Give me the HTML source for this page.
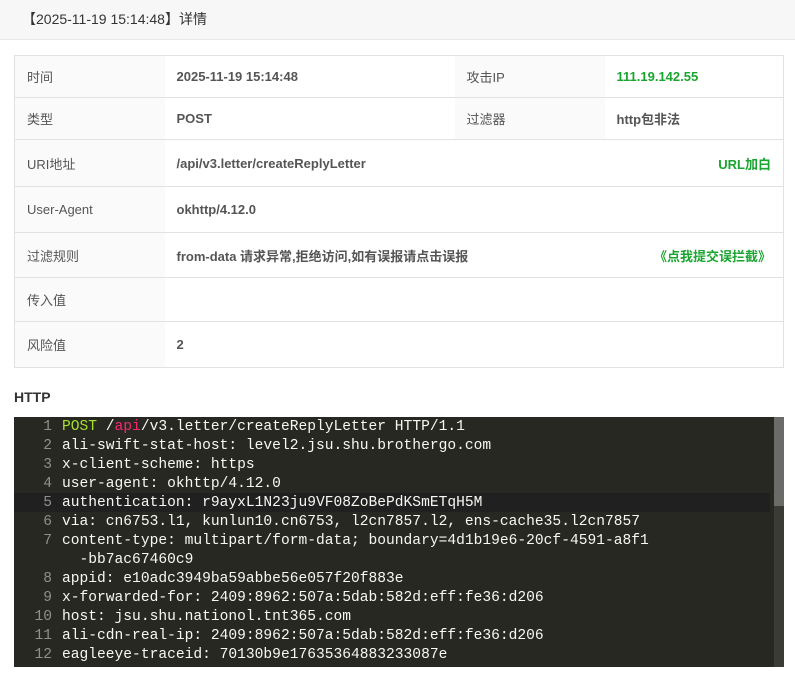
<!DOCTYPE html>
<html><head><meta charset="utf-8"><style>
*{margin:0;padding:0;box-sizing:border-box}
body{width:795px;height:681px;background:#fff;font-family:"Liberation Sans","Noto Sans CJK SC",sans-serif;font-size:13px;color:#333;overflow:hidden;position:relative}
.top{height:40px;background:#f7f7f7;border-bottom:1px solid #e8e8e8;padding-left:22px;line-height:38px;font-size:14px;color:#333}
table{position:absolute;left:14px;top:55px;width:770px;border-collapse:collapse;border:1px solid #e2e2e2}
td{border-top:1px solid #e2e2e2;border-bottom:1px solid #e2e2e2;padding:0 12px;color:#555;font-size:13px}
td.l{background:#fafafa;width:150px}
td.v{font-weight:bold;color:#555}
.g{color:#1aa530;font-weight:bold}
.fx{display:flex;justify-content:space-between;align-items:center}
h3{position:absolute;left:14px;top:389px;font-size:14px;font-weight:bold;color:#333}
.code{position:absolute;left:14px;top:417px;width:770px;height:250px;background:#272822;overflow:hidden;font-family:"Liberation Mono","DejaVu Sans Mono",monospace;font-size:14.6px;color:#f8f8f2}
.in{position:absolute;left:0;top:2px;width:100%;height:100%}
.ln{position:absolute;left:0;width:38px;text-align:right;color:#8f908a}
.tx{position:absolute;left:48px;white-space:pre}
.sb{position:absolute;right:0;top:0;width:10px;height:250px;background:#3a3a37}
.th{position:absolute;right:0;top:0;width:10px;height:89px;background:#6b6b69}
.hl{position:absolute;left:0;top:76px;width:756px;height:19px;background:#202020}
</style></head><body>
<div class="top">【2025-11-19 15:14:48】详情</div>
<table>
<tr style="height:42px"><td class="l">时间</td><td class="v" style="width:290px">2025-11-19 15:14:48</td><td class="l" style="width:117px">攻击IP</td><td class="g">111.19.142.55</td></tr>
<tr style="height:42px"><td class="l">类型</td><td class="v">POST</td><td class="l">过滤器</td><td class="v">http包非法</td></tr>
<tr style="height:47px"><td class="l">URI地址</td><td class="v" colspan="3"><div class="fx"><span>/api/v3.letter/createReplyLetter</span><span class="g">URL加白</span></div></td></tr>
<tr style="height:46px"><td class="l">User-Agent</td><td class="v" colspan="3">okhttp/4.12.0</td></tr>
<tr style="height:45px"><td class="l">过滤规则</td><td class="v" colspan="3"><div class="fx"><span>from-data 请求异常,拒绝访问,如有误报请点击误报</span><span class="g">《点我提交误拦截》</span></div></td></tr>
<tr style="height:44px"><td class="l">传入值</td><td class="v" colspan="3"></td></tr>
<tr style="height:46px"><td class="l">风险值</td><td class="v" colspan="3">2</td></tr>
</table>
<h3>HTTP</h3>
<div class="code">
<div class="hl"></div>
<div class="sb"></div><div class="th"></div>
<div class="in">
<div class="ln" style="top:0">1</div><div class="tx" style="top:0"><span style="color:#a6e22e">POST</span> /<span style="color:#f92672">api</span>/v3.letter/createReplyLetter HTTP/1.1</div>
<div class="ln" style="top:19px">2</div><div class="tx" style="top:19px">ali-swift-stat-host: level2.jsu.shu.brothergo.com</div>
<div class="ln" style="top:38px">3</div><div class="tx" style="top:38px">x-client-scheme: https</div>
<div class="ln" style="top:57px">4</div><div class="tx" style="top:57px">user-agent: okhttp/4.12.0</div>
<div class="ln" style="top:76px">5</div><div class="tx" style="top:76px">authentication: r9ayxL1N23ju9VF08ZoBePdKSmETqH5M</div>
<div class="ln" style="top:95px">6</div><div class="tx" style="top:95px">via: cn6753.l1, kunlun10.cn6753, l2cn7857.l2, ens-cache35.l2cn7857</div>
<div class="ln" style="top:114px">7</div><div class="tx" style="top:114px">content-type: multipart/form-data; boundary=4d1b19e6-20cf-4591-a8f1</div>
<div class="tx" style="top:133px">  -bb7ac67460c9</div>
<div class="ln" style="top:152px">8</div><div class="tx" style="top:152px">appid: e10adc3949ba59abbe56e057f20f883e</div>
<div class="ln" style="top:171px">9</div><div class="tx" style="top:171px">x-forwarded-for: 2409:8962:507a:5dab:582d:eff:fe36:d206</div>
<div class="ln" style="top:190px">10</div><div class="tx" style="top:190px">host: jsu.shu.nationol.tnt365.com</div>
<div class="ln" style="top:209px">11</div><div class="tx" style="top:209px">ali-cdn-real-ip: 2409:8962:507a:5dab:582d:eff:fe36:d206</div>
<div class="ln" style="top:228px">12</div><div class="tx" style="top:228px">eagleeye-traceid: 70130b9e17635364883233087e</div>
</div>
</div>
</body></html>
